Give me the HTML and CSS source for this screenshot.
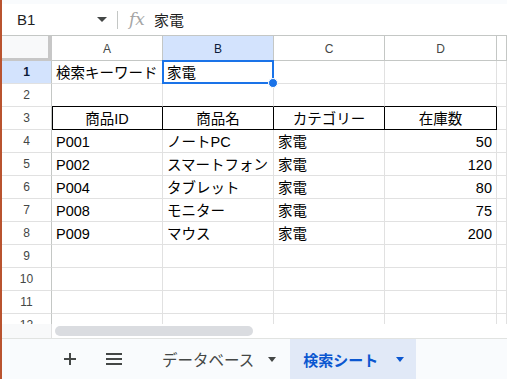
FILE: index.html
```html
<!DOCTYPE html>
<html lang="ja">

<head>
    <meta charset="UTF-8">
    <meta name="viewport" content="width=device-width, initial-scale=1.0">
    <title>検索シート</title>
    <link rel="stylesheet" href="styles.css">
</head>

<body>
    <div class="app">
        <div class="top-strip"></div>

        <div class="formula-bar">
            <div class="name-box">
                <span>B1</span>
                <span class="caret"></span>
            </div>
            <div class="divider"></div>
            <span class="fx">fx</span>
            <span class="formula-text">家電</span>
        </div>

        <div class="grid">
            <div class="corner"></div>
            <div class="col-head">A</div>
            <div class="col-head active">B</div>
            <div class="col-head">C</div>
            <div class="col-head">D</div>
            <div class="col-head"></div>

            <div class="row-head active">1</div>
            <div class="cell">検索キーワード</div>
            <div class="cell selected">家電<span class="handle"></span></div>
            <div class="cell"></div>
            <div class="cell"></div>
            <div class="cell"></div>

            <div class="row-head">2</div>
            <div class="cell above"></div>
            <div class="cell above"></div>
            <div class="cell above"></div>
            <div class="cell above"></div>
            <div class="cell"></div>

            <div class="row-head">3</div>
            <div class="cell th first">商品ID</div>
            <div class="cell th">商品名</div>
            <div class="cell th">カテゴリー</div>
            <div class="cell th">在庫数</div>
            <div class="cell"></div>

            <div class="row-head">4</div>
            <div class="cell">P001</div>
            <div class="cell">ノートPC</div>
            <div class="cell">家電</div>
            <div class="cell num">50</div>
            <div class="cell"></div>

            <div class="row-head">5</div>
            <div class="cell">P002</div>
            <div class="cell">スマートフォン</div>
            <div class="cell">家電</div>
            <div class="cell num">120</div>
            <div class="cell"></div>

            <div class="row-head">6</div>
            <div class="cell">P004</div>
            <div class="cell">タブレット</div>
            <div class="cell">家電</div>
            <div class="cell num">80</div>
            <div class="cell"></div>

            <div class="row-head">7</div>
            <div class="cell">P008</div>
            <div class="cell">モニター</div>
            <div class="cell">家電</div>
            <div class="cell num">75</div>
            <div class="cell"></div>

            <div class="row-head">8</div>
            <div class="cell">P009</div>
            <div class="cell">マウス</div>
            <div class="cell">家電</div>
            <div class="cell num">200</div>
            <div class="cell"></div>

            <div class="row-head">9</div>
            <div class="cell"></div>
            <div class="cell"></div>
            <div class="cell"></div>
            <div class="cell"></div>
            <div class="cell"></div>

            <div class="row-head">10</div>
            <div class="cell"></div>
            <div class="cell"></div>
            <div class="cell"></div>
            <div class="cell"></div>
            <div class="cell"></div>

            <div class="row-head">11</div>
            <div class="cell"></div>
            <div class="cell"></div>
            <div class="cell"></div>
            <div class="cell"></div>
            <div class="cell"></div>

            <div class="row-head">12</div>
            <div class="cell"></div>
            <div class="cell"></div>
            <div class="cell"></div>
            <div class="cell"></div>
            <div class="cell"></div>
        </div>

        <div class="hscroll">
            <div class="hscroll-corner"></div>
            <div class="thumb"></div>
        </div>

        <div class="tab-bar">
            <svg class="icon plus" width="14" height="14" viewBox="0 0 14 14">
                <path d="M7 1v12M1 7h12" stroke="#444746" stroke-width="2" fill="none" />
            </svg>
            <svg class="icon menu" width="16" height="12" viewBox="0 0 16 12">
                <path d="M0 1h16M0 6h16M0 11h16" stroke="#444746" stroke-width="1.8" fill="none" />
            </svg>
            <div class="tab">
                <span>データベース</span>
                <span class="tab-caret"></span>
            </div>
            <div class="tab current">
                <span>検索シート</span>
                <span class="tab-caret"></span>
            </div>
        </div>
    </div>
</body>

</html>
```

FILE: styles.css
```css
:root {
    --grid-line: #e1e1e1;
    --head-line: #c4c7c5;
    --head-text: #444746;
    --select-bg: #d3e3fd;
    --select-blue: #1a73e8;
    --tab-blue: #0b57d0;
    --bar-bg: #f9fbfd;
}

body {
    margin: 0;
    width: 507px;
    height: 379px;
    overflow: hidden;
    font-family: "Liberation Sans", "Noto Sans CJK JP", sans-serif;
    color: #000;
    background: #fff;
}

.app {
    display: flex;
    flex-direction: column;
    height: 379px;
    border-left: 2px solid #b9532f;
}

.top-strip {
    height: 4px;
    background: var(--bar-bg);
}

/* formula bar */

.formula-bar {
    height: 31px;
    display: flex;
    align-items: center;
    border-bottom: 1px solid var(--head-line);
    background: #fff;
}

.name-box {
    width: 101px;
    display: flex;
    align-items: center;
    justify-content: space-between;
    padding-left: 15px;
    font-size: 15px;
    color: #1f1f1f;
    box-sizing: border-box;
}

.caret {
    width: 0;
    height: 0;
    border-left: 5px solid transparent;
    border-right: 5px solid transparent;
    border-top: 5px solid #444746;
    margin-right: -4px;
}

.divider {
    width: 1px;
    height: 18px;
    background: var(--head-line);
    margin-left: 14px;
}

.fx {
    font-family: "DejaVu Serif", "Liberation Serif", serif;
    font-style: italic;
    font-size: 17px;
    color: #a5a5a5;
    margin-left: 11px;
    margin-top: -2px;
}

.formula-text {
    font-size: 15px;
    color: #1f1f1f;
    margin-left: 9px;
}

/* grid */

.grid {
    display: grid;
    grid-template-columns: 50px 111px 111px 111px 112px 1fr;
    grid-template-rows: 25px;
    grid-auto-rows: 23px;
    height: 288px;
    overflow: hidden;
}

.grid > div {
    box-sizing: border-box;
}

.corner {
    background: #f8f9fa;
    border-right: 4px solid #c7c7c7;
    border-bottom: 3px solid #c7c7c7;
}

.col-head {
    display: flex;
    align-items: center;
    justify-content: center;
    font-size: 12px;
    color: var(--head-text);
    border-right: 1px solid var(--head-line);
    border-bottom: 1px solid var(--head-line);
    padding-top: 1px;
}

.col-head.active {
    background: var(--select-bg);
    color: #0b1c3a;
}

.row-head {
    display: flex;
    align-items: center;
    justify-content: center;
    font-size: 12px;
    color: var(--head-text);
    border-right: 1px solid var(--head-line);
    border-bottom: 1px solid var(--grid-line);
}

.row-head.active {
    background: var(--select-bg);
    color: #0b1c3a;
    font-weight: bold;
}

.cell {
    position: relative;
    font-size: 14.5px;
    line-height: 22px;
    padding: 1px 4px 0;
    white-space: nowrap;
    border-right: 1px solid var(--grid-line);
    border-bottom: 1px solid var(--grid-line);
}

.cell.above {
    border-bottom-color: #000;
}

.cell.th {
    text-align: center;
    border-right-color: #000;
    border-bottom-color: #000;
}

.cell.th.first {
    box-shadow: inset 1px 0 #000;
}

.cell.num {
    text-align: right;
}

.cell.selected::after {
    content: "";
    position: absolute;
    top: -1px;
    left: -1px;
    right: -1px;
    bottom: -1px;
    border: 2px solid var(--select-blue);
}

.handle {
    position: absolute;
    right: -5px;
    bottom: -5px;
    width: 8px;
    height: 8px;
    border-radius: 50%;
    background: var(--select-blue);
    border: 1px solid #fff;
    z-index: 1;
}

/* scrollbar */

.hscroll {
    height: 14px;
    display: flex;
    align-items: center;
    background: #fff;
}

.hscroll-corner {
    width: 50px;
    height: 14px;
    background: #f8f9fa;
    border-right: 1px solid var(--grid-line);
    box-sizing: border-box;
}

.thumb {
    width: 198px;
    height: 10px;
    margin-left: 3px;
    border-radius: 5px;
    background: #dadce0;
}

/* sheet tabs */

.tab-bar {
    flex: 1;
    display: flex;
    align-items: stretch;
    background: var(--bar-bg);
    border-top: 1px solid #e1e3e1;
}

.icon {
    align-self: center;
}

.plus {
    margin-left: 61px;
}

.menu {
    margin-left: 29px;
}

.tab {
    display: flex;
    align-items: center;
    padding: 0 12px 0 15px;
    font-size: 15.5px;
    color: var(--head-text);
    margin-left: 25px;
}

.tab-caret {
    width: 0;
    height: 0;
    border-left: 4px solid transparent;
    border-right: 4px solid transparent;
    border-top: 5px solid #444746;
    margin-left: 14px;
}

.tab.current {
    margin-left: 2px;
    padding: 0 12px 0 13px;
    background: #e1e9f7;
    color: var(--tab-blue);
    font-weight: bold;
    font-size: 15px;
}

.tab.current .tab-caret {
    border-top-color: var(--tab-blue);
    margin-left: 18px;
}
```
